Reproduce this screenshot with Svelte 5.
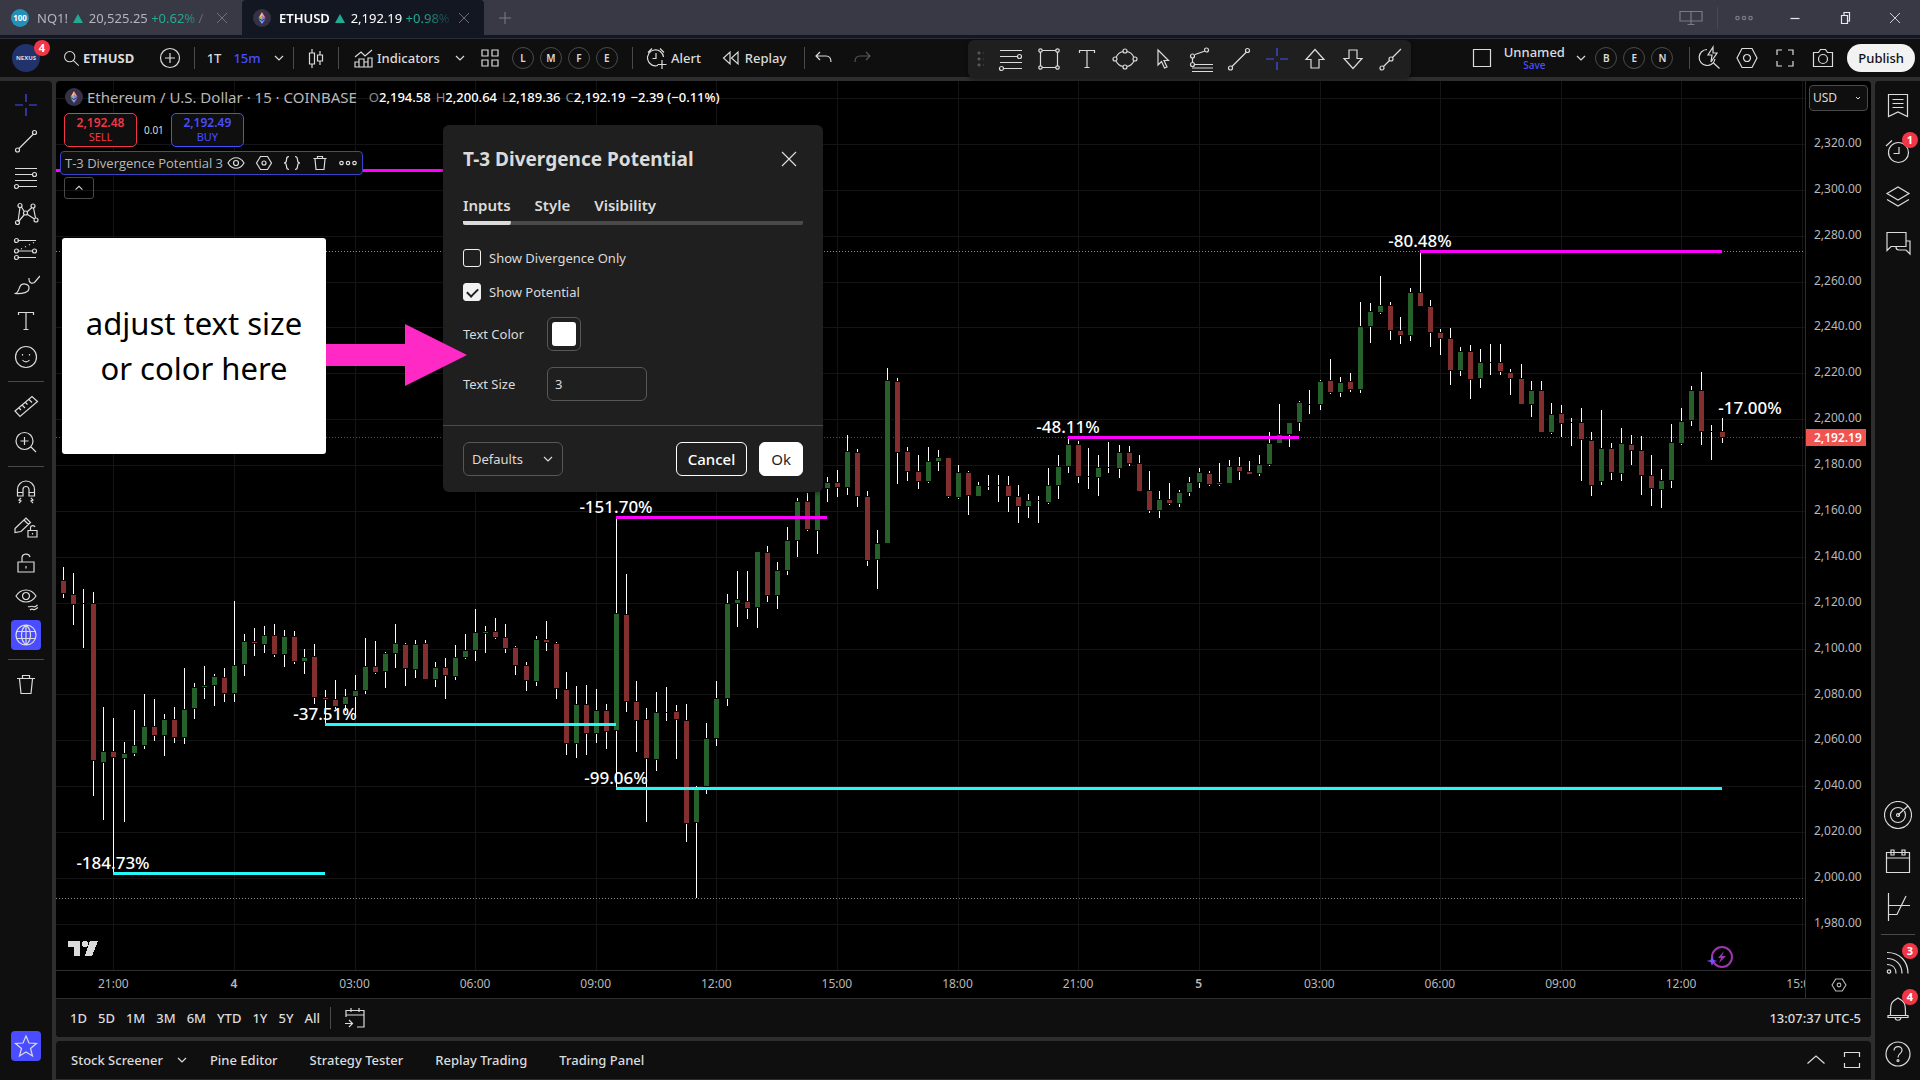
<script lang="ts">
  type Candle = [high: number, top: number, bottom: number, low: number, kind: string];

  // circle as a path, so every icon is one stroked path
  const ring = (x: number, y: number, r: number) =>
    `M${x - r} ${y}a${r} ${r} 0 1 0 ${2 * r} 0a${r} ${r} 0 1 0 ${-2 * r} 0`;

  const icons: Record<string, string> = {
    search: ring(12.5, 12.5, 6) + 'M17 17l6 6',
    plusCircle: ring(14, 14, 9.5) + 'M14 9v10M9 14h10',
    chevron: 'M10 12l4 4 4-4',
    chevronUp: 'M10 16l4-4 4 4',
    wideUp: 'M5.5 17.5L14 10l8.500 7.500',
    candles: 'M10 5v4M10 20v4M7.500 9h5v11h-5zM18 7v4M18 17v4M15.500 11h5v6h-5z',
    indicators: 'M6 23V18h4v5zM10 23v-8h5v8zM15 23v-5h4v5zM19 23v-9h4v9zM6 13l6-5 4 4 7-6M5.5 23h18',
    layout: 'M6 6h6v6H6zM16 6h6v6h-6zM6 16h6v6H6zM16 16h6v6h-6z',
    alert: 'M20.500 13A8 8 0 1 0 15 21.500M13 9v5.500H9.500M5 8.500l4-4M21 8.500l-4-4M19 16v9M14.500 20.500h9',
    replay: 'M13 8v12l-6.500-6zM21 8v12l-6.500-6z',
    undo: 'M10 8l-4 4 4 4M6 12h10c3.500 0 5 2 5 6',
    redo: 'M18 8l4 4-4 4M22 12H12c-3.500 0-5 2-5 6',
    levels: 'M3 5.500h22M3 11.500h17.500M3 17.500h22M6.500 23.500H25' + ring(22.5, 11.5, 2) + ring(4.5, 23.5, 2),
    rect:
      'M7 5.500h14M7 22.500h14M5.500 7v14M22.500 7v14' +
      ring(5.5, 5.5, 1.7) + ring(22.5, 5.5, 1.7) + ring(5.5, 22.5, 1.7) + ring(22.5, 22.5, 1.7),
    text: 'M6.500 8V5.500h15V8M14 5.500v17M11.500 22.500h5',
    ellipse:
      'M5 12.500C6.500 9 9 7 12 6.500M16 6.500c3 .5 5.500 2.500 7 6M23 16c-1.500 3-4 5-7 5.500M12 21.500c-3-.5-5.500-2.500-7-5.500' +
      ring(14, 6, 2) + ring(14, 22, 2) + ring(4, 14, 2) + ring(24, 14, 2),
    pointer: 'M9 5v15l3.500-3.500 3 6.500 2.500-1-3-6.500h4.500z',
    fibChannel:
      'M8 9.500l10-3.500M5.500 13v5M8 19.500h18M5 23h21M5 26.500h21' +
      ring(5.5, 11, 2) + ring(19.5, 5, 2) + ring(5.5, 19.5, 2),
    trend: 'M7 21.500L21.500 7' + ring(5.5, 23, 2) + ring(22.5, 5.5, 2),
    cross: 'M14 3v8M14 17v8M3 14h8M17 14h8',
    arrowUp: 'M14 4.500l9 10h-5v8.500h-8v-8.500H5z',
    arrowDown: 'M14 23.500l9-10h-5V5h-8v8.500H5z',
    infoLine: 'M6.500 21.500l6-6M15.500 12.500L24 4' + ring(5, 23, 2) + ring(14, 14, 2),
    pattern:
      'M6 23L8 8M9.500 8l3 5M15.500 12.500L20 8.500M21.500 9l2 10M7 22l5-6M15.500 15.500l7 4.500' +
      ring(8, 6.5, 2) + ring(21, 7, 2) + ring(13.5, 14, 2) + ring(24, 21, 2) + ring(5.5, 23.5, 2),
    forecast:
      'M5.500 5.500H24M5.500 16h15.500M5.500 22.500H24M9 14l1-.5M13 12l1-.5M17 10l1-.5M21 8l1-.5' +
      ring(4.5, 5.5, 2) + ring(4.5, 16, 2) + ring(22.5, 16, 2) + ring(4.5, 22.5, 2),
    brush: 'M2.500 22.500c4 0 4-4 5.500-7 2-4 9-3 9 1.500s-6 6-14.500 5.500zM17 7c-.5 5 3 6 5.500 4.500L28 5',
    smile: ring(14, 14, 10.5) + 'M10.500 11v1.500M17.500 11v1.500M10.500 17c2 2.500 5 2.500 7 0',
    ruler: 'M3 19L20 4.500l5.500 5L8 24.500zM7 16l2 2M10 13l3 3M13.500 10.500l2 2M17 7.500l3 3',
    zoom: ring(12.5, 13, 8.5) + 'M12.500 9v8M8.500 13h8M19 19l5 5',
    magnet: 'M5.500 19V12.500a8.500 8.500 0 0 1 17 0V19h-5.500v-6.500a3 3 0 0 0-6 0V19zM5.500 15.500H11M17 15.500h5.500M9 21l-2 2 2 1-2 2M19 21l2 2-2 1 2 2',
    pencilLock: 'M3 15.500L14 5l4.500 4.500-9.500 9L3 19.500zM12 7l4.500 4.500M16 17.500h9v6.500h-9zM18.500 17v-2.500c0-2.500 4-2.500 4.500-.5M20.500 20v1.500',
    lock: 'M6 13h16v10H6zM10 13V9c0-5 7-5 8-1M14 17v2.500',
    eyeOff: 'M4 11c5-8 15-8 20 0-5 8-15 8-20 0z' + ring(14, 11, 3.5) + 'M16 21.500c2 1 3-1 5 0s3 0 4.500-1.500M18 25c2-2 3 0 5-.5l3-2',
    globe: ring(14, 14, 10) + 'M14 4v20M4.500 10.500h19M4.500 17.500h19M14 4c-6 5-6 15 0 20M14 4c6 5 6 15 0 20',
    trash: 'M5 8.500h18M10.500 8V5.500h7V8M7.500 9l1.500 14.500h10L20.500 9',
    star: 'M14 4l3 7 7.500.5-6 5 2 7.500-6.500-4-6.500 4 2-7.500-6-5L11 11z',
    bookmark: 'M4.500 3.500h19v22L14 21l-9.500 4.500zM8.500 8.500h11M8.500 12.500h11M8.500 16.500h11',
    alarm: ring(14.5, 15.5, 10) + 'M15 10v6.500h-5.500M2 9l6-5.500',
    layers: 'M3 10.500L14 4l11 6.500L14 17zM3 16.500L14 23l11-6.500',
    chat: 'M3 3.500h19v14H7L3 21.500zM12 18c0 2 1 3 3 3h7l4 4V12h-4',
    radar: ring(14, 14, 13.5) + ring(14, 14, 7.5) + ring(14, 14, 1.5) + 'M14 14L24 5',
    calendar: 'M2.500 5.500h23v20h-23zM2.500 11h23M7 3h3v5H7zM18 3h3v5h-3z',
    pine: 'M4.500 0v28M4.500 21.500H13L22 3M4.500 12.500H26',
    feed: 'M3 4.500c13 0 21 9 21 21M3 10.500c9 0 15 6 15 15M3 16.500c6 0 9 4 9 9' + ring(5, 23.5, 1.7),
    bell: 'M6.500 21c0-11 0-13 7.500-17 7.500 4 7.500 6 7.500 17M4 21.500h20v2H4zM11 24c1 3 5 3 6 0',
    help: ring(14, 14, 12) + 'M10 10.500c0-5.500 8.500-5 8 0-.5 3.500-4 3-4 7' + ring(14, 20.5, 1),
    square: 'M5.500 5.500h17v17h-17z',
    quick: 'M12 5.500a8 8 0 1 0 8 9.500M18.500 19l6 5.500M18 3l-5 8h4l-1 7 6-9h-4z',
    gear: 'M9 4.500h10l5 9.500-5 9.500H9L4 14z' + ring(14, 14, 3.5),
    expand: 'M6 11V6h5M17 6h5v5M22 17v5h-5M11 22H6v-5',
    camera: 'M4.500 8.500h5l2-3h5l2 3h5v14h-19z' + ring(14, 15, 4.5),
    goto: 'M5 13V6.500h18V23h-7M5 11h18M10 4v4M18 4v4M4 19.500h7M8 16l3.500 3.500L8 23',
    eye: 'M6 14c4-7 12-7 16 0-4 7-12 7-16 0z' + ring(14, 14, 2.5),
    hex: 'M10.500 7.500h7l4 6.500-4 6.500h-7l-4-6.500z' + ring(14, 14, 2),
    braces: 'M11 7.500c-5 0 0 6.500-5 6.500 5 0 0 6.500 5 6.500M17 7.500c5 0 0 6.500 5 6.500-5 0 0 6.500-5 6.500',
    bin: 'M7.500 9.500h13M11.500 9V7.500h5V9M9 10l1 10.500h8L19 10',
    dots: ring(7.5, 14, 1.7) + ring(14, 14, 1.7) + ring(20.5, 14, 1.7),
    close: 'M7 7l14 14M21 7L7 21',
    plus: 'M14 7v14M7 14h14',
    monitors: 'M3 7.500h22v9.500H3zM14 7.500v13M10.500 20.500h7',
    minimize: 'M9.500 14.500h9',
    restore: 'M10.500 11.500h6v8h-6zM13 11V8.500h5.500V17H17',
    corners: 'M6.500 11V6.500h15V11M6.500 17v4.500h15V17'
  };

  const drawTools = ['levels', 'rect', 'text', 'ellipse', 'pointer', 'fibChannel', 'trend', 'cross', 'arrowUp', 'arrowDown', 'infoLine'];
  const sideTools = ['cross', 'trend', 'levels', 'pattern', 'forecast', 'brush', 'text', 'smile', '|', 'ruler', 'zoom', '|', 'magnet', 'pencilLock', 'lock', 'eyeOff', 'globe', '|', 'trash'];
  const rightTop = [
    { icon: 'bookmark', count: 0 },
    { icon: 'alarm', count: 1 },
    { icon: 'layers', count: 0 },
    { icon: 'chat', count: 0 }
  ];
  const rightBottom = [
    { icon: 'radar', count: 0 },
    { icon: 'calendar', count: 0 },
    { icon: 'pine', count: 0 },
    { icon: '|', count: 0 },
    { icon: 'feed', count: 3 },
    { icon: 'bell', count: 4 },
    { icon: 'help', count: 0 }
  ];

  const prices = Array.from({ length: 18 }, (_, i) => `${((2320 - i * 20) / 1000).toFixed(2).replace('.', ',')}0.00`);
  const times = ['21:00', '4', '03:00', '06:00', '09:00', '12:00', '15:00', '18:00', '21:00', '5', '03:00', '06:00', '09:00', '12:00', '15:00'];
  const ranges = ['1D', '5D', '1M', '3M', '6M', 'YTD', '1Y', '5Y', 'All'];
  const panels = ['Pine Editor', 'Strategy Tester', 'Replay Trading', 'Trading Panel'];

  // high, body top, body bottom, low, g = up, r = down, d = doji
  const raw = `567 581 593 598 r,573 595 604 625 r,589 603 603 648 d,592 604 760 796 r,707 752 762 820 g,718 752 757 873 r
742 754 758 822 g,710 746 753 756 g,694 727 745 749 g,699 727 735 741 r,714 720 735 756 g,707 720 737 743 r
668 710 737 744 g,683 688 708 719 g,666 686 687 699 g,674 677 685 706 g,668 678 693 702 r,601 666 693 702 g
634 642 664 676 g,628 642 643 656 r,626 636 644 653 g,624 636 654 657 r,630 637 654 667 g,631 637 661 664 r
649 658 661 674 g,644 657 697 704 r,690 698 699 724 r,680 700 706 709 r,689 697 704 711 g,675 691 696 718 g
638 667 690 694 g,641 667 672 674 r,652 654 671 688 g,624 644 653 668 g,643 645 668 686 r,640 645 669 678 g
640 644 679 679 r,662 668 679 687 g,658 668 675 699 r,645 658 676 680 g,634 651 657 659 g,609 633 650 661 g
626 632 633 653 g,618 632 637 639 r,624 638 648 653 r,646 648 665 675 r,662 666 680 691 r,636 640 681 686 g
621 640 642 651 r,642 644 688 699 r,672 690 743 755 r,686 705 743 758 g,685 705 733 755 r,689 711 733 743 g
704 711 731 749 r,518 614 730 787 g,574 615 701 712 r,681 702 720 752 r,708 720 758 822 r,692 713 759 771 g
687 712 712 721 d,705 712 719 759 r,704 721 823 842 r,786 789 822 898 g,723 739 786 794 g,681 699 738 746 g
594 604 698 706 g,571 600 603 627 g,571 602 608 619 r,552 552 607 628 g,546 553 595 602 r,562 571 595 609 g
527 541 570 575 g,498 502 540 557 g,493 502 529 531 r,480 485 530 554 g,477 483 488 502 g,470 483 487 497 r
435 452 487 495 g,449 453 496 507 r,491 497 560 566 r,530 544 559 589 g,368 381 543 543 g,378 382 452 484 r
447 452 471 481 r,455 472 481 489 r,447 462 481 483 g,450 458 461 471 g,458 458 496 498 r,465 473 497 499 g
471 473 495 515 r,482 486 496 496 g,475 486 486 490 d,475 485 485 502 d,476 486 496 512 r,485 497 506 523 r
494 501 506 518 g,496 500 500 523 d,468 486 502 504 g,455 467 485 499 g,438 445 466 473 g,441 445 476 483 r
448 476 476 489 d,455 468 477 496 g,442 467 467 473 d,445 453 468 478 g,446 453 463 466 r,455 464 491 491 r
471 491 510 513 r,491 500 510 518 g,483 500 503 505 r,490 493 503 507 g,477 483 492 496 g,468 473 482 488 g
471 474 484 486 r,463 483 484 486 g,460 467 483 483 g,457 467 471 480 r,461 472 474 474 r,455 465 473 476 g
432 444 464 466 g,404 435 443 443 g,423 423 434 447 g,401 403 422 431 g,390 404 404 414 d,380 382 404 410 g
359 381 392 394 r,377 383 392 397 g,373 382 389 392 r,302 327 389 393 g,303 312 326 343 g,276 306 312 314 g
302 306 330 340 r,317 331 335 344 r,288 293 335 341 g,251 293 306 306 r,300 307 332 347 r,329 333 338 355 r
328 339 370 385 r,347 352 370 376 g,345 352 379 399 r,349 363 378 388 g,344 362 362 375 d,344 363 371 375 r
369 373 378 395 r,364 379 404 404 r,381 391 404 417 g,381 391 432 432 r,403 415 432 434 g,405 414 423 437 r
418 422 422 446 d,408 423 439 481 r,432 441 485 496 r,410 449 481 485 g,443 449 472 480 r,428 444 473 481 g
435 445 450 465 r,436 451 475 495 r,455 476 488 506 r,469 481 489 508 g,424 443 480 488 g,408 422 443 445 g
386 391 420 426 g,372 391 431 445 r,425 431 431 460 d,418 432 437 443 r`;

  const candles = raw.split(/[,\n]/).map((row) => {
    const [high, top, bottom, low, kind] = row.trim().split(' ');
    return [+high, +top, +bottom, +low, kind] as Candle;
  });
  const barX = (i: number) => Math.round(63.21 + i * 10.0505);
  const gridX = times.map((_, i) => barX(5 + i * 12));
  const gridY = Array.from({ length: 19 }, (_, i) => Math.round(98 + i * 45.88));

  const levels = [
    { x1: 56, x2: 700, y: 169, tone: 'high' },
    { x1: 616, x2: 827, y: 516, tone: 'high', label: '-151.70%', lx: 616, ly: 513 },
    { x1: 1068, x2: 1299, y: 436, tone: 'high', label: '-48.11%', lx: 1068, ly: 433 },
    { x1: 1420, x2: 1722, y: 250, tone: 'high', label: '-80.48%', lx: 1420, ly: 247 },
    { x1: 325, x2: 616, y: 723, tone: 'low', label: '-37.51%', lx: 325, ly: 720 },
    { x1: 616, x2: 1722, y: 787, tone: 'low', label: '-99.06%', lx: 616, ly: 784 },
    { x1: 113, x2: 325, y: 872, tone: 'low', label: '-184.73%', lx: 113, ly: 869 }
  ];

  let divergenceOnly = $state(false);
  let showPotential = $state(true);
  let textSize = $state('3');
  let activeTab = $state('Inputs');
</script>

{#snippet icon(name: string, size = 28)}
  <svg class="icon" width={size} height={size} viewBox="0 0 28 28" aria-hidden="true"><path d={icons[name]} /></svg>
{/snippet}

{#snippet eth()}
  <svg class="coin" width="18" height="18" viewBox="0 0 18 18" aria-hidden="true">
    <circle cx="9" cy="9" r="9" fill="#363147" />
    <path d="M9 3L5.500 9 9 7.500z" fill="#f3c55b" />
    <path d="M9 3l3.500 6L9 7.500z" fill="#ef8fa0" />
    <path d="M5.500 9L9 7.500V11z" fill="#6fd08c" />
    <path d="M12.500 9L9 7.500V11z" fill="#9a7be0" />
    <path d="M5.500 10L9 15v-3z" fill="#62b7f0" />
    <path d="M12.500 10L9 15v-3z" fill="#7e8cf5" />
  </svg>
{/snippet}

<div class="app">
  <header class="titlebar">
    <div class="tab">
      <span class="index">100</span>
      <span class="tab-text">NQ1! <i class="up"></i> 20,525.25 <span class="gain">+0.62%</span> /</span>
      <button class="plain" aria-label="Close tab">{@render icon('close', 20)}</button>
    </div>
    <div class="tab active">
      {@render eth()}
      <span class="tab-text"><b>ETHUSD</b> <i class="up"></i> 2,192.19 <span class="gain">+0.98%</span></span>
      <button class="plain" aria-label="Close tab">{@render icon('close', 20)}</button>
    </div>
    <button class="plain new-tab" aria-label="New tab">{@render icon('plus', 24)}</button>
    <div class="window-buttons">
      <button class="plain dim" aria-label="Link windows">{@render icon('monitors')}</button>
      <span class="sep"></span>
      <button class="plain dim" aria-label="Menu">{@render icon('dots')}</button>
      <button class="plain" aria-label="Minimize">{@render icon('minimize')}</button>
      <button class="plain" aria-label="Restore">{@render icon('restore')}</button>
      <button class="plain" aria-label="Close">{@render icon('close', 20)}</button>
    </div>
  </header>

  <div class="toolbar">
    <button class="plain avatar" aria-label="Profile"><span class="face">NEXUS</span><span class="badge">4</span></button>
    <button class="plain symbol">{@render icon('search', 24)}ETHUSD</button>
    <button class="plain w40" aria-label="Compare">{@render icon('plusCircle')}</button>
    <span class="sep"></span>
    <button class="plain w38">1T</button>
    <button class="plain w28 blue">15m</button>
    <button class="plain w28 intervals" aria-label="Intervals">{@render icon('chevron')}</button>
    <span class="sep"></span>
    <button class="plain w44" aria-label="Candles">{@render icon('candles')}</button>
    <span class="sep"></span>
    <button class="plain indicators">{@render icon('indicators')}Indicators</button>
    <button class="plain w28" aria-label="Favorite indicators">{@render icon('chevron')}</button>
    <button class="plain w28" aria-label="Templates">{@render icon('layout')}</button>
    <div class="letters">
      {#each ['L', 'M', 'F', 'E'] as l}<button class="letter">{l}</button>{/each}
    </div>
    <span class="sep"></span>
    <button class="plain alert">{@render icon('alert')}Alert</button>
    <button class="plain replay">{@render icon('replay')}Replay</button>
    <span class="sep"></span>
    <button class="plain w38" aria-label="Undo">{@render icon('undo')}</button>
    <button class="plain w38 faded" aria-label="Redo">{@render icon('redo')}</button>

    <div class="draw-bar">
      <span class="grip"></span>
      {#each drawTools as t}
        <button class="plain w38" class:blue={t === 'cross'} aria-label={t}>{@render icon(t)}</button>
      {/each}
    </div>

    <div class="right-tools">
      <button class="plain w38" aria-label="Layout">{@render icon('square')}</button>
      <button class="plain layout-name">Unnamed<small>Save</small></button>
      <button class="plain w28" aria-label="Layouts">{@render icon('chevron')}</button>
      <div class="letters">
        {#each ['B', 'E', 'N'] as l}<button class="letter">{l}</button>{/each}
      </div>
      <span class="sep"></span>
      <button class="plain w38" aria-label="Quick search">{@render icon('quick')}</button>
      <button class="plain w38" aria-label="Settings">{@render icon('gear')}</button>
      <button class="plain w38" aria-label="Fullscreen">{@render icon('expand')}</button>
      <button class="plain w38" aria-label="Snapshot">{@render icon('camera')}</button>
      <button class="publish">Publish</button>
    </div>
  </div>

  <div class="main">
    <aside class="left">
      {#each sideTools as t}
        {#if t === '|'}
          <hr />
        {:else}
          <button class="plain tool" class:blue={t === 'cross'} class:on={t === 'globe'} aria-label={t}><span>{@render icon(t)}</span></button>
        {/if}
      {/each}
      <button class="plain tool on favorites" aria-label="Favorites"><span>{@render icon('star')}</span></button>
    </aside>

    <main class="center">
      <section class="chart-panel">
        <div class="chart-row">
          <div class="chart">
            <svg class="plot" viewBox="56 81 1749 889" preserveAspectRatio="xMinYMin slice" shape-rendering="crispEdges">
              {#each gridX as x}<rect class="grid" {x} y="81" width="1" height="889" />{/each}
              {#each gridY as y}<rect class="grid" x="56" {y} width="1749" height="1" />{/each}
              <path class="dotted" d="M56 251.500H1804M56 898.500H1804" />
              <path class="dotted last" d="M56 437.500H1804" />
              {#each candles as [high, top, bottom, low, kind], i}
                <rect x={barX(i)} y={high} width="1" height={low - high} fill="#fff" />
                {#if kind === 'd'}
                  <rect x={barX(i) - 3} y={top} width="7" height="1" />
                {:else}
                  <rect x={barX(i) - 3} y={top - 1} width="7" height={bottom - top + 2} />
                  <rect class={kind} x={barX(i) - 2} y={top} width="5" height={bottom - top} />
                {/if}
              {/each}
              {#each levels as l}
                <rect class={l.tone} x={l.x1} y={l.y} width={l.x2 - l.x1} height="3" />
                {#if l.label}<text x={l.lx} y={l.ly}>{l.label}</text>{/if}
              {/each}
              <text x="1750" y="414">-17.00%</text>
              <g class="brand">
                <path d="M68 941h12v15h-6v-9h-6zM90 941h8l-6 15h-7z" />
                <circle cx="85" cy="944" r="3" />
              </g>
              <g shape-rendering="auto">
                <circle cx="1722" cy="957" r="10" fill="none" stroke="#a035b0" stroke-width="2" />
                <path d="M1724 951l-6 7h3l-2 5 7-7h-4z" fill="#a035b0" />
                <path d="M1712 956l1.500 4 4 1-4 1-1.500 4-1.500-4-4-1 4-1z" fill="#7c4dff" />
              </g>
            </svg>

            <div class="legend">
              <div class="legend-title">
                {@render eth()}
                <span class="name">Ethereum / U.S. Dollar · 15 · COINBASE</span>
                <span class="ohlc">
                  <span>O<b>2,194.58</b></span><span>H<b>2,200.64</b></span><span>L<b>2,189.36</b></span><span>C<b>2,192.19</b></span><b>−2.39 (−0.11%)</b>
                </span>
              </div>
              <div class="orders">
                <button class="order sell"><b>2,192.48</b>SELL</button>
                <span>0.01</span>
                <button class="order buy"><b>2,192.49</b>BUY</button>
              </div>
              <div class="study">
                <span>T-3 Divergence Potential 3</span>
                {#each ['eye', 'hex', 'braces', 'bin', 'dots'] as t}
                  <button class="plain w28" aria-label={t}>{@render icon(t)}</button>
                {/each}
              </div>
              <button class="collapse" aria-label="Collapse legend">{@render icon('chevronUp', 24)}</button>
            </div>

            <div class="callout">
              <p>adjust text size<br />or color here</p>
              <svg width="142" height="70" viewBox="0 0 142 70" aria-hidden="true"><path d="M0 24h79V4l62 31-62 31V46H0z" fill="#ff29c6" /></svg>
            </div>
          </div>
          <div class="price-axis">
            <select class="currency" aria-label="Currency"><option>USD</option></select>
            <svg class="currency-arrow" width="12" height="12" viewBox="0 0 12 12" aria-hidden="true"><path d="M4 5l2 2 2-2" /></svg>
            <div class="prices">
              {#each prices as p}<span>{p}</span>{/each}
            </div>
            <span class="last-price">2,192.19</span>
          </div>
        </div>
        <div class="time-row">
          <div class="times">
            <div class="time-labels">{#each times as t}<span class:day={t.length === 1}>{t}</span>{/each}</div>
          </div>
          <button class="plain axis-settings" aria-label="Axis settings">{@render icon('hex', 26)}</button>
        </div>
        <div class="range-row">
          {#each ranges as r}<button class="plain">{r}</button>{/each}
          <span class="sep"></span>
          <button class="plain" aria-label="Go to date">{@render icon('goto')}</button>
          <button class="plain clock">13:07:37 UTC-5</button>
        </div>
      </section>

      <footer class="bottom">
        <button class="plain">Stock Screener</button>
        <button class="plain w28" aria-label="Screeners">{@render icon('chevron')}</button>
        {#each panels as p}<button class="plain panel">{p}</button>{/each}
        <div class="bottom-right">
          <button class="plain" aria-label="Open panel">{@render icon('wideUp')}</button>
          <button class="plain" aria-label="Maximize panel">{@render icon('corners')}</button>
        </div>
      </footer>
    </main>

    <aside class="right">
      {#each rightTop as b}
        <button class="plain side" aria-label={b.icon}>{@render icon(b.icon)}{#if b.count}<span class="badge">{b.count}</span>{/if}</button>
      {/each}
      <span class="spacer"></span>
      {#each rightBottom as b}
        {#if b.icon === '|'}
          <hr />
        {:else}
          <button class="plain side" aria-label={b.icon}>{@render icon(b.icon)}{#if b.count}<span class="badge">{b.count}</span>{/if}</button>
        {/if}
      {/each}
    </aside>
  </div>

  <div class="dialog" role="dialog" aria-labelledby="dialog-title">
    <div class="dialog-head">
      <h2 id="dialog-title">T-3 Divergence Potential</h2>
      <button class="plain" aria-label="Close">{@render icon('close')}</button>
    </div>
    <div class="tabs">
      {#each ['Inputs', 'Style', 'Visibility'] as t}
        <button class="plain" class:selected={activeTab === t} onclick={() => (activeTab = t)}>{t}</button>
      {/each}
    </div>
    <div class="fields">
      <label class="check"><input type="checkbox" bind:checked={divergenceOnly} />Show Divergence Only</label>
      <label class="check"><input type="checkbox" bind:checked={showPotential} />Show Potential</label>
      <div class="field">
        <label for="text-color">Text Color</label>
        <button id="text-color" class="swatch" aria-label="Text Color"><span></span></button>
      </div>
      <div class="field">
        <label for="text-size">Text Size</label>
        <input id="text-size" type="text" bind:value={textSize} />
      </div>
    </div>
    <div class="dialog-foot">
      <button class="defaults">Defaults {@render icon('chevron')}</button>
      <button class="cancel">Cancel</button>
      <button class="ok">Ok</button>
    </div>
  </div>
</div>

<style>
  :global(body) {
    background: #2e2e2e;
  }

  .app {
    position: relative;
    display: flex;
    flex-direction: column;
    height: 100vh;
    overflow: hidden;
    background: #2e2e2e;
    color: #dbdbdb;
    font: 13px/16px 'Noto Sans', sans-serif;
  }

  .app * {
    box-sizing: border-box;
  }

  button,
  input,
  select {
    font: inherit;
    color: inherit;
  }

  .plain {
    display: flex;
    flex: none;
    align-items: center;
    justify-content: center;
    padding: 0;
    border: 0;
    background: none;
    white-space: nowrap;
  }

  .icon {
    display: block;
    flex: none;
    fill: none;
    stroke: currentColor;
    stroke-width: 1.2;
  }

  .coin {
    flex: none;
  }

  .blue {
    color: #4a4dff;
  }

  .sep {
    flex: none;
    width: 1px;
    height: 22px;
    background: #4a4a4a;
  }

  .w28 {
    width: 28px;
  }

  .w38 {
    width: 38px;
  }

  .w40 {
    width: 40px;
  }

  .w44 {
    width: 44px;
  }

  /* title bar */
  .titlebar {
    display: flex;
    flex: none;
    height: 39px;
    border-bottom: 1px solid #2a2e39;
    background: linear-gradient(#383944 35px, #131722 35px);
    color: #b2b5be;
  }

  .tab {
    display: flex;
    flex: none;
    align-items: center;
    width: 242px;
    height: 35px;
    padding: 0 10px 0 11px;
  }

  .tab.active {
    border-radius: 4px 4px 0 0;
    background: #131722;
    color: #fff;
  }

  .tab .plain,
  .new-tab {
    color: #787b86;
  }

  .tab-text {
    flex: 1;
    overflow: hidden;
    margin-left: 8px;
    white-space: nowrap;
    mask-image: linear-gradient(90deg, #000 144px, transparent 176px);
  }

  .tab-text b {
    font-weight: 600;
  }

  .index {
    width: 18px;
    border-radius: 9px;
    background: #2490b8;
    color: #fff;
    font-size: 8px;
    font-weight: 700;
    line-height: 18px;
    text-align: center;
  }

  .up {
    display: inline-block;
    margin: 0 2px;
    border: 5px solid transparent;
    border-top: 0;
    border-bottom: 9px solid #22ab94;
  }

  .gain {
    color: #22ab94;
  }

  .new-tab {
    width: 42px;
    height: 35px;
  }

  .window-buttons {
    display: flex;
    align-items: center;
    height: 35px;
    margin-left: auto;
    color: #e8e8ee;
  }

  .window-buttons .plain {
    width: 50px;
  }

  .window-buttons .dim {
    width: 52px;
    color: #787b86;
  }

  /* top toolbar */
  .toolbar {
    position: relative;
    display: flex;
    flex: none;
    align-items: center;
    height: 38px;
    background: #0f0f0f;
    font-weight: 500;
  }

  .avatar {
    position: relative;
    width: 52px;
  }

  .face {
    width: 28px;
    border-radius: 14px;
    background: #22336b;
    font-size: 6px;
    font-weight: 700;
    line-height: 28px;
  }

  .badge {
    position: absolute;
    top: -4px;
    right: 2px;
    width: 16px;
    border-radius: 8px;
    background: #f23645;
    color: #fff;
    font-size: 11px;
    font-weight: 700;
    line-height: 16px;
    text-align: center;
  }

  .symbol {
    width: 91px;
    margin-left: 7px;
    justify-content: flex-start;
    font-weight: 700;
  }

  .toolbar > .w40 + .sep {
    margin-left: 4px;
  }

  .intervals {
    margin-left: 4px;
  }

  .indicators {
    margin: 0 4px 0 10px;
  }

  .toolbar > .indicators ~ .w28 {
    margin-left: 2px;
  }

  .letters {
    display: flex;
    gap: 6px;
    margin: 0 14px 0 8px;
  }

  .letter {
    width: 22px;
    height: 22px;
    padding: 0;
    border: 1px solid #4a4a4a;
    border-radius: 11px;
    background: none;
    font-size: 10px;
    font-weight: 600;
  }

  .alert {
    margin: 0 16px 0 10px;
  }

  .replay {
    margin-right: 18px;
  }

  .faded {
    color: #575757;
  }

  .draw-bar {
    position: absolute;
    z-index: 2;
    top: 1px;
    left: 968px;
    display: flex;
    align-items: center;
    height: 38px;
    padding-right: 1px;
    border-radius: 6px;
    background: #1f1f1f;
    box-shadow: 0 2px 4px rgba(0, 0, 0, 0.4);
  }

  .grip {
    width: 8px;
    height: 18px;
    margin: 0 8px;
    background: radial-gradient(circle, #575757 1px, transparent 2px) 0 0 / 6px 6px;
  }

  .right-tools {
    display: flex;
    align-items: center;
    margin-left: auto;
  }

  .layout-name {
    flex-direction: column;
    width: 66px;
    line-height: 15px;
  }

  .layout-name small {
    color: #4a4dff;
    font-size: 10px;
    line-height: 11px;
  }

  .right-tools .letters {
    margin: 0 16px 0 0;
  }

  .publish {
    height: 28px;
    margin: 0 5px 0 5px;
    padding: 0 11px;
    border: 0;
    border-radius: 14px;
    background: #f2f2f2;
    color: #0f0f0f;
  }

  /* side rails */
  .main {
    display: flex;
    flex: 1;
    gap: 4px;
    min-height: 0;
    padding-top: 4px;
  }

  .left,
  .right {
    display: flex;
    flex: none;
    flex-direction: column;
    align-items: center;
    background: #0f0f0f;
  }

  .left {
    width: 52px;
    padding: 6px 0 16px;
    border-radius: 0 4px 0 0;
  }

  .left hr,
  .right hr {
    flex: none;
    width: 36px;
    height: 1px;
    margin: 6px 0;
    border: 0;
    background: #4a4a4a;
  }

  .tool {
    width: 52px;
    height: 36px;
  }

  .tool span {
    padding: 1px;
    border-radius: 4px;
  }

  .tool.on span {
    background: #4a4dff;
  }

  .favorites {
    margin-top: auto;
  }

  .right {
    width: 45px;
    padding: 1px 0 3px;
    border-radius: 4px 0 0;
  }

  .right hr {
    width: 34px;
    margin: 4px 0;
  }

  .side {
    position: relative;
    width: 45px;
    height: 46px;
  }

  .side .badge {
    top: 4px;
  }

  .spacer {
    flex: 1;
  }

  /* chart */
  .center {
    display: flex;
    flex: 1;
    flex-direction: column;
    gap: 4px;
    min-width: 0;
    padding-bottom: 1px;
  }

  .chart-panel {
    display: flex;
    flex: 1;
    flex-direction: column;
    overflow: hidden;
    min-height: 0;
    border-radius: 4px;
    background: #000;
  }

  .chart-row {
    display: flex;
    flex: 1;
    min-height: 0;
  }

  .chart {
    position: relative;
    flex: 1;
    overflow: hidden;
  }

  .plot {
    position: absolute;
    inset: 0;
    width: 100%;
    height: 100%;
  }

  .grid {
    fill: #141414;
  }

  .dotted {
    stroke: #8a8a8a;
    stroke-dasharray: 1 2;
  }

  .dotted.last {
    stroke: #8a3c3c;
  }

  .g {
    fill: #26612c;
  }

  .r {
    fill: #842f2f;
  }

  .high {
    fill: #f0f;
  }

  .low {
    fill: #24f8f8;
  }

  .plot text {
    fill: #fff;
    font-size: 17px;
    font-weight: 500;
    text-anchor: middle;
  }

  .brand {
    fill: #dbdbdb;
  }

  .legend {
    position: relative;
    padding: 6px 4px;
  }

  .legend-title {
    display: flex;
    align-items: center;
    height: 20px;
    padding-left: 5px;
  }

  .name {
    margin: 0 12px 0 4px;
    color: #b8b8b8;
    font-size: 15px;
  }

  .ohlc {
    display: flex;
    gap: 5px;
    color: #8c8c8c;
    font-size: 13px;
  }

  .ohlc b {
    color: #fff;
    font-weight: 500;
  }

  .orders {
    display: flex;
    align-items: center;
    gap: 7px;
    margin: 6px 4px 4px;
    font-size: 10px;
  }

  .order {
    display: flex;
    flex-direction: column;
    align-items: center;
    justify-content: center;
    width: 73px;
    height: 34px;
    padding: 0;
    border: 1px solid;
    border-radius: 5px;
    background: #0f0f0f;
    font-size: 11px;
    line-height: 14px;
  }

  .order b {
    font-size: 12px;
    font-weight: 600;
  }

  .sell {
    color: #f23645;
  }

  .buy {
    color: #4a4dff;
  }

  .study {
    display: flex;
    align-items: center;
    width: max-content;
    height: 24px;
    padding-left: 4px;
    border: 1px solid #3d40c9;
    border-radius: 4px;
    background: #0f0f0f;
  }

  .study span {
    width: 157px;
    color: #b8b8b8;
    font-family: 'Open Sans', sans-serif;
    white-space: nowrap;
  }

  .collapse {
    display: flex;
    align-items: center;
    justify-content: center;
    width: 30px;
    height: 22px;
    margin: 2px 4px;
    padding: 0;
    border: 1px solid #4a4a4a;
    border-radius: 3px;
    background: none;
  }

  .callout {
    position: absolute;
    z-index: 4;
    top: 157px;
    left: 6px;
    display: flex;
    align-items: center;
  }

  .callout p {
    display: flex;
    align-items: center;
    justify-content: center;
    width: 264px;
    height: 216px;
    margin: 0;
    border-radius: 3px;
    background: #fff;
    color: #000;
    font-size: 31px;
    line-height: 45px;
    text-align: center;
  }

  .callout svg {
    margin-top: 18px;
  }

  .price-axis {
    position: relative;
    display: flex;
    flex: none;
    flex-direction: column;
    width: 66px;
    border-left: 1px solid #2e2e2e;
    color: #b8b8b8;
    font-size: 12px;
  }

  .currency {
    flex: none;
    width: 59px;
    height: 26px;
    margin: 4px 3px 9px;
    padding: 0 3px;
    border: 1px solid #4a4a4a;
    border-radius: 4px;
    background: #0f0f0f;
    color: #dbdbdb;
    appearance: none;
  }

  .currency-arrow {
    position: absolute;
    top: 11px;
    right: 7px;
    fill: none;
    stroke: #dbdbdb;
  }

  .prices {
    display: grid;
    flex: 1;
    grid-template-rows: repeat(18, 1fr);
    align-items: center;
    padding: 0 0 24px 8px;
  }

  .last-price {
    position: absolute;
    top: 348px;
    left: 0;
    width: 60px;
    padding-left: 8px;
    background: #f05350;
    color: #fff;
    font-weight: 600;
    line-height: 17px;
  }

  .time-row {
    display: flex;
    flex: none;
    height: 29px;
    border-top: 1px solid #2e2e2e;
    border-bottom: 1px solid #2e2e2e;
    color: #b8b8b8;
    font-size: 12px;
  }

  .times {
    flex: 1;
    overflow: hidden;
  }

  .time-labels {
    display: grid;
    grid-template-columns: repeat(15, 1fr);
    margin: 0 -57px 0 -3px;
    line-height: 26px;
    text-align: center;
  }

  .day {
    font-weight: 600;
  }

  .axis-settings {
    width: 66px;
    border-left: 1px solid #2e2e2e;
  }

  .range-row {
    display: flex;
    flex: none;
    align-items: center;
    gap: 11px;
    height: 38px;
    padding: 0 10px 0 14px;
    background: #0f0f0f;
    font-weight: 500;
  }

  .range-row .sep {
    margin: 0 -1px;
  }

  .clock {
    margin-left: auto;
  }

  .bottom {
    display: flex;
    flex: none;
    align-items: center;
    height: 38px;
    padding: 0 5px 0 15px;
    border-radius: 4px 4px 0 0;
    background: #0f0f0f;
    font-weight: 500;
  }

  .panel + .panel {
    margin-left: 32px;
  }

  .bottom > .w28 {
    margin: 0 14px 0 5px;
  }

  .bottom-right {
    display: flex;
    gap: 8px;
    margin-left: auto;
  }

  /* settings dialog */
  .dialog {
    position: absolute;
    z-index: 3;
    top: 125px;
    left: 443px;
    width: 380px;
    border-radius: 6px;
    background: #1f1f1f;
    box-shadow: 0 2px 4px rgba(0, 0, 0, 0.4);
  }

  .dialog-head {
    display: flex;
    align-items: center;
    justify-content: space-between;
    height: 68px;
    padding: 0 20px;
  }

  h2 {
    margin: 0;
    font-size: 19px;
    font-weight: 700;
  }

  .tabs {
    display: flex;
    gap: 24px;
    height: 32px;
    margin: 0 20px;
    border-radius: 2px;
    background: linear-gradient(#4a4a4a, #4a4a4a) bottom / 100% 4px no-repeat;
  }

  .tabs .plain {
    padding-bottom: 8px;
    font-size: 15px;
    font-weight: 600;
  }

  .tabs .selected {
    border-radius: 2px;
    background: linear-gradient(#dbdbdb, #dbdbdb) bottom / 100% 4px no-repeat;
  }

  .fields {
    padding: 16px 20px;
  }

  .check {
    display: flex;
    align-items: center;
    gap: 8px;
    height: 34px;
  }

  .check input {
    width: 18px;
    height: 18px;
    margin: 0;
    border: 1px solid #f2f2f2;
    border-radius: 3px;
    appearance: none;
  }

  .check input:checked {
    background: #f2f2f2;
  }

  .check input:checked::after {
    content: '';
    display: block;
    width: 9px;
    height: 5px;
    margin: 4px 3px;
    border: solid #1f1f1f;
    border-width: 0 0 2px 2px;
    transform: rotate(-45deg);
  }

  .field {
    display: grid;
    grid-template-columns: 84px 1fr;
    align-items: center;
    height: 50px;
  }

  .swatch {
    width: 34px;
    height: 34px;
    padding: 4px;
    border: 1px solid #575757;
    border-radius: 6px;
    background: none;
  }

  .swatch span {
    display: block;
    height: 24px;
    border-radius: 3px;
    background: #fff;
  }

  .field input {
    width: 100px;
    height: 34px;
    padding: 0 7px;
    border: 1px solid #575757;
    border-radius: 6px;
    background: none;
  }

  .dialog-foot {
    display: flex;
    gap: 12px;
    padding: 16px 20px;
    border-top: 1px solid #4a4a4a;
  }

  .dialog-foot button {
    height: 34px;
    padding: 0 11px;
    border: 1px solid #fff;
    border-radius: 6px;
    background: none;
    color: #fff;
    font-size: 15px;
    font-weight: 500;
  }

  .dialog-foot .defaults {
    display: flex;
    align-items: center;
    justify-content: space-between;
    width: 100px;
    margin-right: auto;
    padding: 0 0 0 8px;
    border-color: #575757;
    color: #dbdbdb;
    font-size: 13px;
    font-weight: 400;
  }

  .dialog-foot .ok {
    background: #fff;
    color: #1f1f1f;
    font-weight: 400;
  }
</style>
